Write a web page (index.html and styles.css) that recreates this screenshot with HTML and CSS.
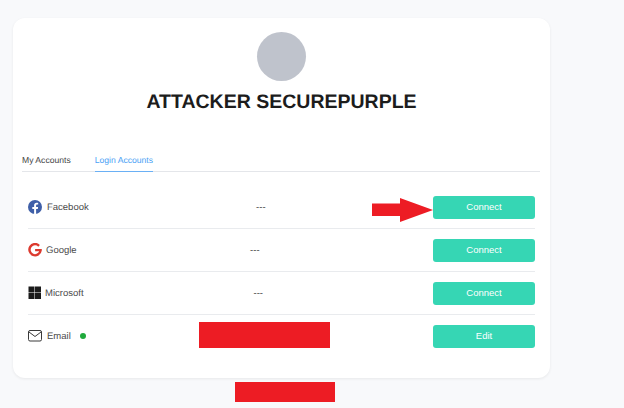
FILE: index.html
```html
<!DOCTYPE html>
<html lang="en">

<head>
    <meta charset="UTF-8">
    <meta name="viewport" content="width=device-width, initial-scale=1.0">
    <title>Login Accounts</title>

    <link rel="stylesheet" href="styles.css">
</head>

<body>
    <div class="card">
        <div class="profile">
            <div class="avatar"></div>
            <h1 class="name">ATTACKER SECUREPURPLE</h1>
        </div>

        <div class="tabs">
            <span class="tab">My Accounts</span>
            <span class="tab active">Login Accounts</span>
        </div>

        <div class="list">
            <div class="row">
                <div class="account">
                    <svg class="icon" viewBox="0 0 14 14">
                        <circle cx="7" cy="7" r="7" fill="#3f5fa8" />
                        <path d="M8.1 14V8.9h1.7l.3-2H8.1V5.700c0-.6.3-1.100 1.100-1.100h1V2.900c-.4-.1-.9-.1-1.500-.1-1.600 0-2.600 1-2.600 2.700v1.400H4.300v2h1.800V14z" fill="#fff" />
                    </svg>
                    <span>Facebook</span>
                </div>
                <span class="value">---</span>
                <button class="btn">Connect</button>
            </div>

            <div class="row">
                <div class="account tight">
                    <svg class="icon" viewBox="0 0 14 14">
                        <path d="M11.900 1.900A6.800 6.800 0 1 0 13.800 7.500V5.900H7.100v2.400h4.100A4.400 4.400 0 1 1 10.300 3.700z" fill="#dc3a2f" />
                    </svg>
                    <span>Google</span>
                </div>
                <span class="value">---</span>
                <button class="btn">Connect</button>
            </div>

            <div class="row">
                <div class="account tighter">
                    <svg class="icon" viewBox="0 0 14 14">
                        <rect x="0.500" y="0.500" width="6" height="6" fill="#1b1b1b" />
                        <rect x="7" y="0.500" width="6" height="6" fill="#1b1b1b" />
                        <rect x="0.500" y="7" width="6" height="6" fill="#1b1b1b" />
                        <rect x="7" y="7" width="6" height="6" fill="#1b1b1b" />
                    </svg>
                    <span>Microsoft</span>
                </div>
                <span class="value">---</span>
                <button class="btn">Connect</button>
            </div>

            <div class="row last">
                <div class="account">
                    <svg class="icon" viewBox="0 0 14 12">
                        <rect x="0.500" y="0.500" width="13" height="10.500" rx="1.500" fill="none" stroke="#3a3a3a" />
                        <path d="M1 2l6 4.500L13 2" fill="none" stroke="#3a3a3a" />
                    </svg>
                    <span>Email</span>
                    <i class="dot"></i>
                </div>
                <button class="btn">Edit</button>
            </div>
        </div>
    </div>

    <!-- red marks on top of the screenshot -->
    <svg class="arrow" viewBox="0 0 61 24">
        <path d="M0 5.500h28V0l33 12L28 24v-6H0z" fill="#ed1c24" />
    </svg>
    <div class="redact redact-email"></div>
    <div class="redact redact-foot"></div>
</body>

</html>
```

FILE: styles.css
```css
* {
    box-sizing: border-box;
}

body {
    margin: 0;
    height: 408px;
    overflow: hidden;
    position: relative;
    background-color: #f8f9fb;
    font-family: "Liberation Sans", Arial, sans-serif;
    font-size: 9.5px;
    color: #4a4a4a;
    text-rendering: geometricPrecision;
}

.card {
    width: 537px;
    height: 360px;
    margin: 18px 0 0 13px;
    padding-top: 14px;
    background-color: #fff;
    border-radius: 12px;
    box-shadow: 0 1px 3px rgba(0, 0, 0, 0.07);
    display: flex;
    flex-direction: column;
}

/* header */
.profile {
    display: flex;
    flex-direction: column;
    align-items: center;
}

.avatar {
    width: 49px;
    height: 49px;
    border-radius: 50%;
    background-color: #bfc3cc;
}

.name {
    margin: 10px 0 0;
    font-size: 19.5px;
    line-height: 23px;
    font-weight: bold;
    color: #1c1c1c;
}

/* tabs */
.tabs {
    margin: 37px 10px 0 9px;
    height: 21px;
    display: flex;
    gap: 24px;
    border-bottom: 1px solid #e4e6ea;
}

.tab {
    height: 21px;
    line-height: 19px;
    font-size: 8.6px;
    color: #444;
}

.tab.active {
    color: #4a9ff5;
    border-bottom: 1px solid #6ab0f5;
}

/* account rows */
.list {
    margin-top: 14px;
    padding: 0 15px;
}

.row {
    padding: 10px 0 9px;
    display: flex;
    align-items: center;
    justify-content: space-between;
    border-bottom: 1px solid #e9ebee;
}

.row.last {
    border-bottom: none;
}

.account {
    display: flex;
    align-items: center;
    gap: 5px;
}

.account.tight {
    gap: 4px;
}

.account.tighter {
    gap: 3px;
}

.icon {
    width: 14px;
    height: 14px;
    flex: none;
    margin-bottom: 2px;
}

.value {
    color: #444;
}

.dot {
    width: 6px;
    height: 6px;
    margin-left: 4px;
    margin-bottom: 2px;
    border-radius: 50%;
    background-color: #1faa3c;
}

.btn {
    width: 102px;
    height: 23px;
    padding: 0 0 2px;
    border: none;
    border-radius: 3px;
    background-color: #36d6b4;
    color: #fff;
    font-family: inherit;
    font-size: 9.5px;
}

/* annotations */
.arrow {
    position: absolute;
    left: 372px;
    top: 198px;
    width: 61px;
    height: 24px;
}

.redact {
    position: absolute;
    background-color: #ed1c24;
}

.redact-email {
    left: 199px;
    top: 322px;
    width: 131px;
    height: 26px;
}

.redact-foot {
    left: 235px;
    top: 382px;
    width: 100px;
    height: 20px;
}
```
